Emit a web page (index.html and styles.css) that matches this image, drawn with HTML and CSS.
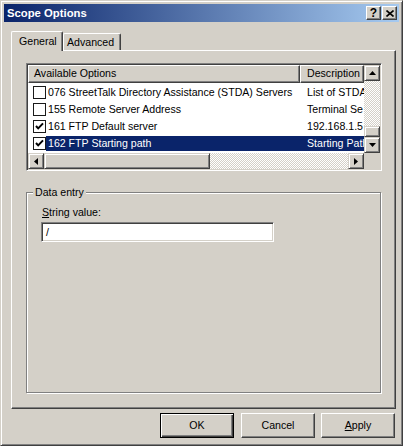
FILE: index.html
```html
<!DOCTYPE html>
<html>
<head>
<meta charset="utf-8">
<title>Scope Options</title>
<link rel="stylesheet" href="styles.css">
</head>
<body>
<div class="window">
  <div class="titlebar">
    <span class="title">Scope Options</span>
    <div class="tb-buttons">
      <span class="tb-btn help">?</span>
      <span class="tb-btn close"><svg width="8" height="7" viewBox="0 0 8 7"><path d="M0.5 0.5 L7.5 6.5 M7.5 0.5 L0.5 6.5" stroke="#000" stroke-width="1.6" fill="none"/></svg></span>
    </div>
  </div>
  <div class="content">
    <div class="tabs">
      <div class="tab active">General</div>
      <div class="tab adv">Advanced</div>
    </div>
    <div class="panel">
      <div class="listview">
        <div class="lv-view">
          <div class="lv-header">
            <div class="hcol c1">Available Options</div>
            <div class="hcol c2">Description</div>
          </div>
          <div class="rows">
            <div class="row">
              <span class="chk"><svg width="13" height="13" viewBox="0 0 13 13"><rect x="0.5" y="0.5" width="12" height="12" fill="#fff" stroke="#1a1a1a"/></svg></span>
              <span class="cell name">076 StreetTalk Directory Assistance (STDA) Servers</span>
              <span class="cell desc">List of STDA</span>
            </div>
            <div class="row">
              <span class="chk"><svg width="13" height="13" viewBox="0 0 13 13"><rect x="0.5" y="0.5" width="12" height="12" fill="#fff" stroke="#1a1a1a"/></svg></span>
              <span class="cell name">155 Remote Server Address</span>
              <span class="cell desc">Terminal Se</span>
            </div>
            <div class="row">
              <span class="chk"><svg width="13" height="13" viewBox="0 0 13 13"><rect x="0.5" y="0.5" width="12" height="12" fill="#fff" stroke="#1a1a1a"/><path d="M3 6 L5.2 8.4 L10 3.4" stroke="#000" stroke-width="2" fill="none"/></svg></span>
              <span class="cell name">161 FTP Default server</span>
              <span class="cell desc">192.168.1.5</span>
            </div>
            <div class="row selected">
              <span class="chk"><svg width="13" height="13" viewBox="0 0 13 13"><rect x="0.5" y="0.5" width="12" height="12" fill="#fff" stroke="#1a1a1a"/><path d="M3 6 L5.2 8.4 L10 3.4" stroke="#000" stroke-width="2" fill="none"/></svg></span>
              <span class="cell name">162 FTP Starting path</span>
              <span class="cell desc">Starting Path</span>
            </div>
          </div>
        </div>
        <div class="vscroll">
          <div class="sbtn"><svg width="7" height="4" viewBox="0 0 7 4"><path d="M3.5 0 L7 4 L0 4 Z" fill="#000"/></svg></div>
          <div class="track"></div>
          <div class="thumb"></div>
          <div class="sbtn"><svg width="7" height="4" viewBox="0 0 7 4"><path d="M0 0 L7 0 L3.5 4 Z" fill="#000"/></svg></div>
        </div>
        <div class="hscroll">
          <div class="sbtn"><svg width="4" height="7" viewBox="0 0 4 7"><path d="M4 0 L4 7 L0 3.5 Z" fill="#000"/></svg></div>
          <div class="hthumb"></div>
          <div class="track"></div>
          <div class="sbtn"><svg width="4" height="7" viewBox="0 0 4 7"><path d="M0 0 L4 3.5 L0 7 Z" fill="#000"/></svg></div>
        </div>
        <div class="corner"></div>
      </div>
      <fieldset class="group">
        <legend>Data entry</legend>
        <div class="group-body">
          <div class="label"><u>S</u>tring value:</div>
          <div class="textbox">/</div>
        </div>
      </fieldset>
    </div>
    <div class="buttons">
      <div class="btn default"><span>OK</span></div>
      <div class="btn cancel"><span>Cancel</span></div>
      <div class="btn apply"><span><u>A</u>pply</span></div>
    </div>
  </div>
</div>
</body>
</html>
```

FILE: styles.css
```css
* { box-sizing: border-box; }
html, body { margin: 0; padding: 0; }
body {
  width: 403px;
  height: 446px;
  overflow: hidden;
  background: #d4d0c8;
  font-family: "Liberation Sans", Arial, sans-serif;
  font-size: 10.6px;
  color: #000;
}
.window {
  width: 403px;
  height: 446px;
  border: 1px solid;
  border-color: #d4d0c8 #404040 #404040 #d4d0c8;
  box-shadow: inset 1px 1px #fff, inset -1px -1px #808080;
  padding: 3px;
  display: flex;
  flex-direction: column;
}
.titlebar {
  height: 18px;
  flex: none;
  display: flex;
  align-items: center;
  background: linear-gradient(to right, #0a246a, #a6caf0);
  padding: 0 2px 0 3px;
}
.title {
  flex: 1;
  color: #fff;
  font-weight: bold;
  font-size: 11.3px;
}
.tb-buttons { display: flex; gap: 1px; }
.tb-btn {
  width: 15px;
  height: 14px;
  background: #d4d0c8;
  border: 1px solid;
  border-color: #fff #404040 #404040 #fff;
  box-shadow: inset -1px -1px #808080;
  display: flex;
  align-items: center;
  justify-content: center;
  font-weight: bold;
  font-size: 12px;
  line-height: 12px;
}
.tb-btn svg { display: block; }

.content {
  flex: 1;
  display: flex;
  flex-direction: column;
  padding: 9px 3px 4px 7px;
}
.tabs {
  height: 19px;
  display: flex;
  align-items: flex-end;
  flex: none;
}
.tab {
  height: 17px;
  border-top: 1px solid #fff;
  border-left: 1px solid #fff;
  border-right: 1px solid #404040;
  box-shadow: inset -1px 0 #808080;
  border-radius: 2px 2px 0 0;
  padding-top: 2px;
  line-height: 13px;
  background: #d4d0c8;
}
.tab.active {
  width: 52px;
  height: 20px;
  margin-bottom: -1px;
  padding-left: 7px;
  padding-top: 3px;
  position: relative;
  z-index: 1;
}
.tab.adv {
  width: 58px;
  padding-left: 3px;
}

.panel {
  height: 359px;
  flex: none;
  border: 1px solid;
  border-color: #fff #404040 #404040 #fff;
  box-shadow: inset -1px -1px #808080;
  padding: 12px 0 0 14px;
  display: flex;
  flex-direction: column;
}
.listview {
  width: 356px;
  height: 108px;
  flex: none;
  border: 1px solid;
  border-color: #808080 #fff #fff #808080;
  box-shadow: inset 1px 1px #404040, inset -1px -1px #d4d0c8;
  padding: 1px;
  display: grid;
  grid-template-columns: 336px 16px;
  grid-template-rows: 88px 16px;
  background: #fff;
}
.lv-view {
  overflow: hidden;
  background: #fff;
}
.lv-header {
  display: flex;
  height: 18px;
}
.hcol {
  height: 18px;
  background: #d4d0c8;
  border: 1px solid;
  border-color: #fff #404040 #404040 #fff;
  box-shadow: inset -1px -1px #808080;
  line-height: 15px;
  white-space: nowrap;
  overflow: hidden;
}
.hcol.c1 { width: 272px; flex: none; padding-left: 5px; }
.hcol.c2 { width: 64px; flex: none; padding-left: 6px; }
.rows { padding-top: 1px; }
.row {
  height: 17px;
  display: flex;
  align-items: center;
  white-space: nowrap;
}
.chk { width: 13px; height: 13px; margin-left: 5px; flex: none; }
.chk svg { display: block; }
.cell { height: 15px; line-height: 15px; overflow: hidden; flex: none; }
.cell.name { width: 254px; padding-left: 2px; }
.cell.desc { width: 64px; padding-left: 7px; }
.row.selected .cell { background: #0a246a; color: #fff; }

.sbtn {
  width: 16px;
  height: 16px;
  flex: none;
  background: #d4d0c8;
  border: 1px solid;
  border-color: #d4d0c8 #404040 #404040 #d4d0c8;
  box-shadow: inset 1px 1px #fff, inset -1px -1px #808080;
  display: flex;
  align-items: center;
  justify-content: center;
}
.sbtn svg { display: block; }
.track {
  flex: 1;
  background: repeating-conic-gradient(#fff 0 25%, #d4d0c8 0 50%) 0 0 / 2px 2px;
}
.vscroll {
  display: flex;
  flex-direction: column;
}
.thumb, .hthumb {
  flex: none;
  background: #d4d0c8;
  border: 1px solid;
  border-color: #d4d0c8 #404040 #404040 #d4d0c8;
  box-shadow: inset 1px 1px #fff, inset -1px -1px #808080;
}
.thumb { height: 11px; }
.hscroll { display: flex; }
.hthumb { width: 166px; }
.corner { background: #d4d0c8; }

.group {
  margin: 15px 0 0 0;
  width: 355px;
  height: 207px;
  flex: none;
  border: 1px solid #808080;
  box-shadow: inset 1px 1px #fff, 1px 1px #fff;
  padding: 0 0 0 6px;
}
.group legend {
  padding: 0 2px;
  line-height: 13px;
  background: #d4d0c8;
}
.group-body { padding: 7px 0 0 9px; }
.label { line-height: 13px; height: 13px; }
.textbox {
  margin-top: 3px;
  margin-left: -1px;
  width: 233px;
  height: 20px;
  background: #fff;
  border: 1px solid;
  border-color: #808080 #fff #fff #808080;
  box-shadow: inset 1px 1px #404040, inset -1px -1px #d4d0c8;
  padding: 0 0 0 4px;
  line-height: 18px;
}

.buttons {
  display: flex;
  justify-content: flex-end;
  margin-top: 4px;
  padding-right: 1px;
  flex: none;
}
.btn {
  width: 74px;
  height: 25px;
  background: #d4d0c8;
  border: 1px solid;
  border-color: #fff #404040 #404040 #fff;
  box-shadow: inset -1px -1px #808080;
  display: flex;
  align-items: center;
  justify-content: center;
  line-height: 13px;
}
.btn.default {
  border: 1px solid #000;
  box-shadow: inset 1px 1px #fff, inset -1px -1px #404040, inset -2px -2px #808080;
}
.btn.cancel { margin-left: 7px; }
.btn.apply { margin-left: 6px; }
```
